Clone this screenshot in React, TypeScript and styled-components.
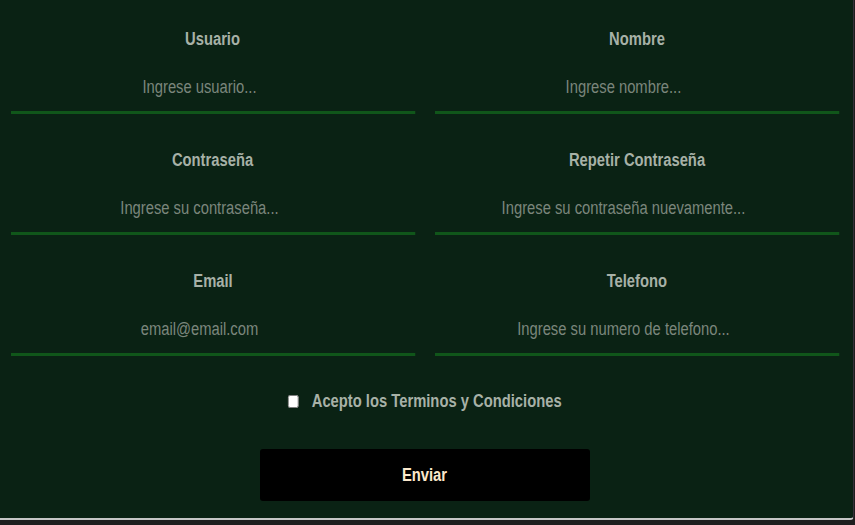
import React from "react";
import styled, { createGlobalStyle } from "styled-components";

const NARROW = 0.82;
const FONT = `"Liberation Sans", Arial, sans-serif`;

const Global = createGlobalStyle`
  html, body { margin: 0; padding: 0; background: #1e1e1e; }
  body { font-family: ${FONT}; }
  * { box-sizing: border-box; }
`;

const Card = styled.form`
  width: 854px;
  height: 520px;
  background: #0a2214;
  border-right: 1px solid #35303a;
  border-bottom: 2px solid #c6c6c6;
  border-bottom-right-radius: 4px;
  padding: 28px 15px 0 11px;
  display: flex;
  flex-direction: column;
  align-items: center;
`;

const Grid = styled.div`
  width: 100%;
  display: grid;
  grid-template-columns: 404px 404px;
  column-gap: 20px;
  row-gap: 35px;
`;

const Field = styled.div`
  display: flex;
  flex-direction: column;
  align-items: stretch;
  width: 404px;
`;

const Label = styled.label`
  font-weight: 700;
  font-size: 18px;
  line-height: 22px;
  color: #a7b1a7;
  text-align: center;
  margin-bottom: 13px;
`;

/* Arial Narrow look: horizontally compressed Arial */
const Narrow = styled.span`
  display: inline-block;
  transform: scaleX(${NARROW});
  transform-origin: center;
`;

const InputWrap = styled.div`
  width: 404px;
  height: 51px;
`;

const Input = styled.input`
  display: block;
  width: ${404 / NARROW}px;
  height: 51px;
  padding: 0 33px 0 0;
  margin: 0;
  border: none;
  border-bottom: 3px solid #10561a;
  background: transparent;
  outline: none;
  text-align: center;
  font-family: ${FONT};
  font-size: 18px;
  color: #c8d0c8;
  transform: scaleX(${NARROW});
  transform-origin: left center;
  &::placeholder { color: #7b867c; opacity: 1; }
`;

const CheckRow = styled.label`
  margin-top: 34px;
  display: flex;
  align-items: center;
  gap: 15px;
  font-weight: 700;
  font-size: 18px;
  line-height: 22px;
  color: #a7b1a7;
  transform: scaleX(${NARROW});
`;

const Check = styled.input`
  width: 15px;
  height: 13px;
  margin: 0;
`;

const Button = styled.button`
  margin-top: 37px;
  width: 330px;
  height: 52px;
  border: none;
  border-radius: 3px;
  background: #000;
  color: #fbe8cc;
  font-family: ${FONT};
  font-weight: 700;
  font-size: 18px;
  cursor: pointer;
`;

const fields = [
  { label: "Usuario", placeholder: "Ingrese usuario...", type: "text" },
  { label: "Nombre", placeholder: "Ingrese nombre...", type: "text" },
  { label: "Contraseña", placeholder: "Ingrese su contraseña...", type: "password" },
  { label: "Repetir Contraseña", placeholder: "Ingrese su contraseña nuevamente...", type: "password" },
  { label: "Email", placeholder: "email@email.com", type: "email" },
  { label: "Telefono", placeholder: "Ingrese su numero de telefono...", type: "tel" },
];

export default function App() {
  return (
    <>
      <Global />
      <Card onSubmit={(e) => e.preventDefault()}>
        <Grid>
          {fields.map((f) => (
            <Field key={f.label}>
              <Label>
                <Narrow>{f.label}</Narrow>
              </Label>
              <InputWrap>
                <Input type={f.type} placeholder={f.placeholder} />
              </InputWrap>
            </Field>
          ))}
        </Grid>
        <CheckRow>
          <Check type="checkbox" />
          Acepto los Terminos y Condiciones
        </CheckRow>
        <Button type="submit">
          <Narrow>Enviar</Narrow>
        </Button>
      </Card>
    </>
  );
}
